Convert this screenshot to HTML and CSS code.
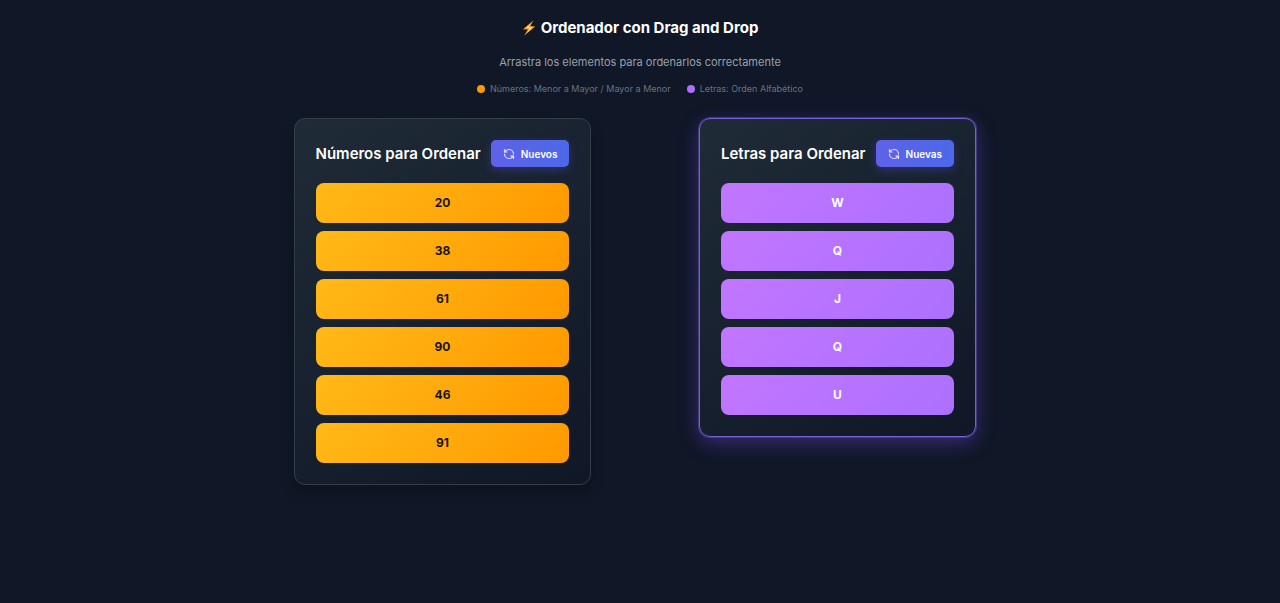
FILE: index.html
```html
<!DOCTYPE html>
<html lang="es">
<head>
<meta charset="utf-8">
<meta name="viewport" content="width=device-width, initial-scale=1">
<title>Ordenador con Drag and Drop</title>
<link rel="stylesheet" href="styles.css">
</head>
<body>
<svg class="sprite" aria-hidden="true">
  <symbol id="refresh" viewBox="0 0 24 24">
    <path d="M21 12a9 9 0 0 0-9-9 9.75 9.75 0 0 0-6.74 2.74L3 8M3 3v5h5M3 12a9 9 0 0 0 9 9 9.75 9.75 0 0 0 6.74-2.74L21 16M16 16h5v5" fill="none" stroke="currentColor" stroke-width="2.4" stroke-linecap="round" stroke-linejoin="round"/>
    <path d="M15.500 15.500h6v6z" fill="currentColor"/>
  </symbol>
</svg>
<header class="header">
  <h1 class="title">
    <svg class="bolt" viewBox="0 0 14 16" aria-hidden="true"><path d="M11.600.3 1 9.200l4.800.2-3.700 6.300L13.200 6.400l-5-.3z" fill="#fb9e16"/><path d="M9.200 3.400 3.900 8l4 .2-2.400 3.900 5-4.600-4.200-.2z" fill="#fff0b0"/></svg>
    Ordenador con Drag and Drop
  </h1>
  <p class="subtitle">Arrastra los elementos para ordenarlos correctamente</p>
  <ul class="legend">
    <li class="legend-item"><span class="dot dot-number"></span>Números: Menor a Mayor / Mayor a Menor</li>
    <li class="legend-item"><span class="dot dot-letter"></span>Letras: Orden Alfabético</li>
  </ul>
</header>
<main class="board">
  <section class="card">
    <div class="card-head">
      <h2 class="card-title">Números para Ordenar</h2>
      <button class="button" type="button"><svg class="icon" aria-hidden="true"><use href="#refresh"/></svg>Nuevos</button>
    </div>
    <ul class="list numbers">
      <li class="item" draggable="true">20</li>
      <li class="item" draggable="true">38</li>
      <li class="item" draggable="true">61</li>
      <li class="item" draggable="true">90</li>
      <li class="item" draggable="true">46</li>
      <li class="item" draggable="true">91</li>
    </ul>
  </section>
  <section class="card card-active">
    <div class="card-head">
      <h2 class="card-title">Letras para Ordenar</h2>
      <button class="button" type="button"><svg class="icon" aria-hidden="true"><use href="#refresh"/></svg>Nuevas</button>
    </div>
    <ul class="list letters">
      <li class="item" draggable="true">W</li>
      <li class="item" draggable="true">Q</li>
      <li class="item" draggable="true">J</li>
      <li class="item" draggable="true">Q</li>
      <li class="item" draggable="true">U</li>
    </ul>
  </section>
</main>
</body>
</html>
```
FILE: styles.css
```css
* { box-sizing: border-box; margin: 0; padding: 0; }
body {
  min-height: 100vh;
  padding: 16px;
  background: #101726;
  color: #fff;
  font-family: Inter, "Liberation Sans", sans-serif;
}
ul { list-style: none; }
.sprite { display: none; }
.header {
  display: flex;
  flex-direction: column;
  align-items: center;
  margin-bottom: 20px;
}
.title {
  display: flex;
  align-items: center;
  gap: 5px;
  margin-bottom: 14px;
  font-size: 15px;
  line-height: 24px;
  font-weight: 700;
}
.bolt { width: 14px; height: 16px; }
.subtitle {
  margin-bottom: 10px;
  color: #99a1af;
  font-size: 11px;
  line-height: 16px;
}
.legend { display: flex; flex-wrap: wrap; gap: 16px; }
.legend-item {
  display: flex;
  align-items: center;
  gap: 5px;
  color: #6a7282;
  font-size: 9px;
  line-height: 18px;
}
.dot { width: 8px; height: 8px; border-radius: 50%; }
.dot-number { background: #fe9a00; }
.dot-letter { background: #ad6fff; }
.board {
  display: grid;
  grid-template-columns: 1fr 1fr;
  gap: 22px;
  max-width: 768px;
  margin: 0 auto;
  justify-items: center;
  align-items: start;
}
.card {
  padding: 21px;
  border: 1px solid #343d4a;
  border-radius: 11px;
  background: linear-gradient(145deg, #1f2b36, #182230 45%, #101727);
  box-shadow: 0 8px 14px rgba(0, 0, 0, 0.2);
}
.card-active {
  border-color: #7560d8;
  box-shadow: 0 0 0 1px rgba(117, 96, 216, 0.4), 0 6px 20px rgba(124, 77, 255, 0.36);
}
.card-head {
  display: flex;
  align-items: center;
  justify-content: space-between;
  gap: 10px;
  margin-bottom: 16px;
}
.card-title {
  font-size: 15px;
  line-height: 22px;
  font-weight: 600;
}
.button {
  display: flex;
  align-items: center;
  gap: 6px;
  height: 27px;
  padding: 0 12px;
  border: 0;
  border-radius: 5px;
  background: linear-gradient(90deg, #5f62e9, #4c68e8);
  box-shadow: 0 3px 10px rgba(97, 80, 240, 0.3);
  color: #fff;
  font: 600 10px/16px Inter, "Liberation Sans", sans-serif;
  cursor: pointer;
}
.icon { width: 12px; height: 12px; color: #e6dcff; }
.list { display: grid; gap: 8px; }
.item {
  border-radius: 8px;
  font-size: 12px;
  line-height: 40px;
  font-weight: 700;
  text-align: center;
  cursor: grab;
}
.numbers .item { background: linear-gradient(135deg, #ffba18, #ff9900); color: #171410; }
.letters .item { background: linear-gradient(135deg, #c276ff, #ac70ff); }

@media (max-width: 640px) {
  .board { grid-template-columns: 1fr; }
}
```
